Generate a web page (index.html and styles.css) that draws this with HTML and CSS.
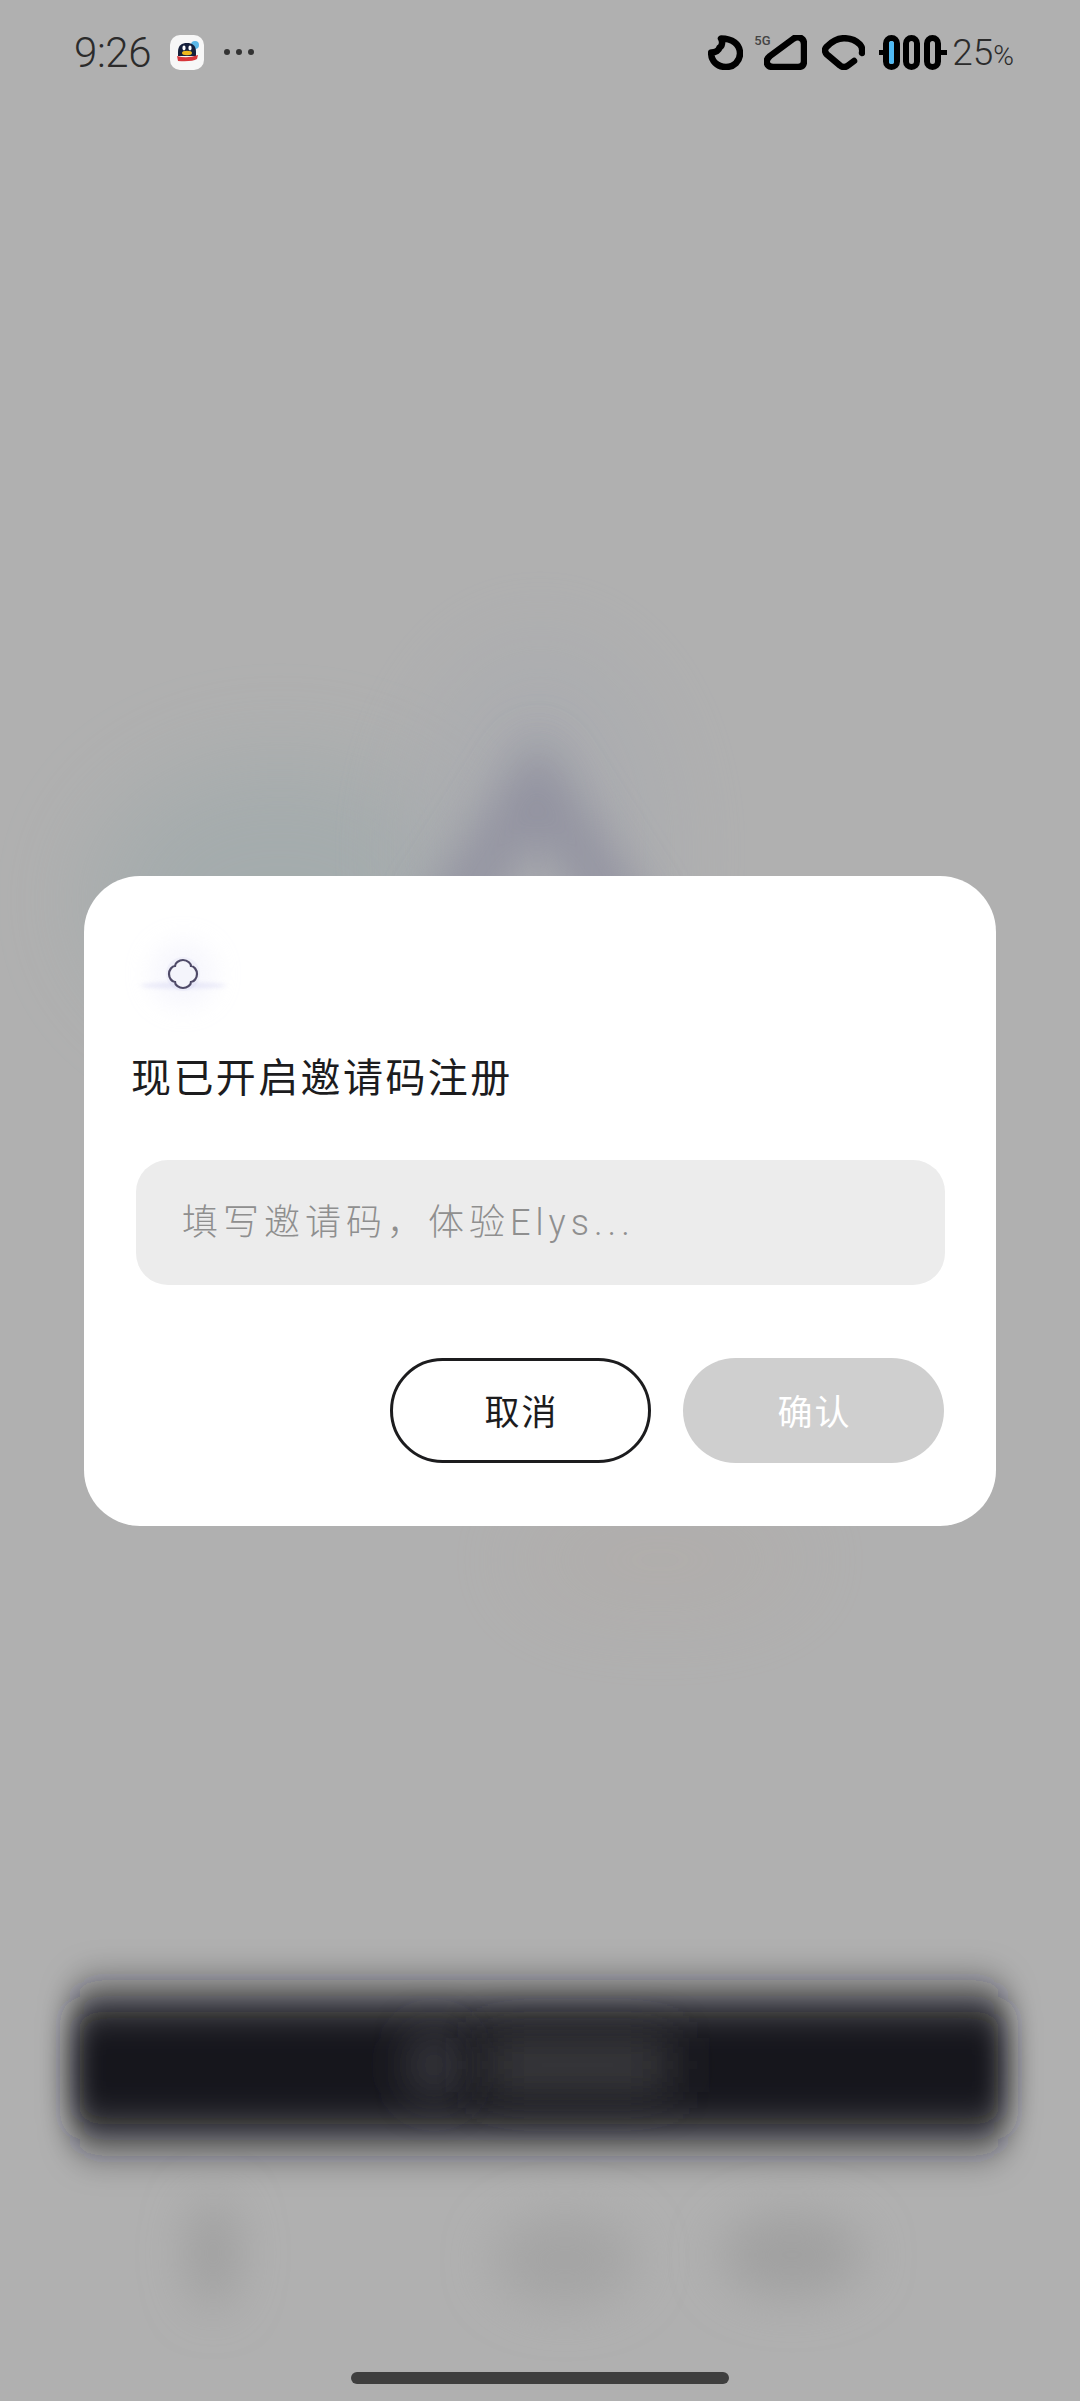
FILE: index.html
```html
<!DOCTYPE html>
<html lang="zh-CN">
<head>
  <meta charset="UTF-8">
  <title>邀请码注册</title>
  <link rel="stylesheet" href="styles.css">
</head>
<body>
  <div class="page">
    <!-- Blurred app behind the dialog -->
    <svg class="backdrop" width="1080" height="2401" viewBox="0 0 1080 2401" aria-hidden="true">
      <defs>
        <filter id="blurBig" filterUnits="userSpaceOnUse" x="-200" y="300" width="1500" height="1800"><feGaussianBlur stdDeviation="50"/></filter>
        <filter id="blurMid" filterUnits="userSpaceOnUse" x="0" y="600" width="1080" height="1801"><feGaussianBlur stdDeviation="24"/></filter>
        <filter id="blurBar" filterUnits="userSpaceOnUse" x="0" y="1850" width="1080" height="450"><feGaussianBlur stdDeviation="15 24"/></filter>
      </defs>
      <ellipse cx="280" cy="900" rx="190" ry="140" fill="#a0aaac" opacity="0.75" filter="url(#blurBig)"/>
      <ellipse cx="540" cy="850" rx="130" ry="210" fill="#a9abb0" opacity="0.7" filter="url(#blurBig)"/>
      <path d="M440 935 L537 782 L634 935" fill="none" stroke="#8b8b9c" stroke-width="52" opacity="0.8" filter="url(#blurMid)"/>
      <ellipse cx="660" cy="1560" rx="150" ry="50" fill="#b1aca9" opacity="0.7" filter="url(#blurBig)"/>
      <rect x="70" y="1996" width="938" height="144" rx="26" fill="#15151a" filter="url(#blurBar)"/>
      <ellipse cx="434" cy="2065" rx="22" ry="32" fill="#4a4a4f" filter="url(#blurMid)"/>
      <rect x="485" y="2038" width="185" height="54" fill="#3c3c40" filter="url(#blurMid)"/>
      <ellipse cx="213" cy="2253" rx="22" ry="55" fill="#9c9c9c" filter="url(#blurMid)"/>
      <ellipse cx="565" cy="2260" rx="72" ry="46" fill="#a4a4a4" filter="url(#blurMid)"/>
      <ellipse cx="792" cy="2255" rx="72" ry="42" fill="#a0a0a0" filter="url(#blurMid)"/>
    </svg>

    <!-- Status bar -->
    <div class="status-bar">
      <div class="status-left">
        <span class="time">9:26</span>
        <svg class="app-icon" width="34" height="35" viewBox="0 0 34 35">
          <rect width="34" height="35" rx="10" fill="#f7f7f7"/>
          <circle cx="25" cy="10" r="4" fill="#5bb8e8"/>
          <path d="M8 17C8 10 12 8 17 8s9 2 9 9v4H8z" fill="#16203c"/>
          <ellipse cx="14" cy="13" rx="1.6" ry="2.4" fill="#fff"/>
          <ellipse cx="20" cy="13" rx="1.6" ry="2.4" fill="#fff"/>
          <ellipse cx="17" cy="18" rx="5" ry="2.2" fill="#f0b81e"/>
          <path d="M7 21q10 3 21-1l-1 4q-5 3-19 2z" fill="#d8353a"/>
        </svg>
        <div class="dots"><i></i><i></i><i></i></div>
      </div>
      <div class="status-right">
        <svg class="ic-moon" width="35" height="35" viewBox="0 0 35 35" fill="none" stroke="#000" stroke-width="6.5" stroke-linejoin="round">
          <path d="M13 3.5C24 3.5 32 9 32 18.5C32 26 26 32 18 32C9 32 3 26 3.2 17.5C8 17.5 11 15 11.5 12.5C14 11.5 15 7 13 3.5Z"/>
        </svg>
        <div class="signal">
          <span class="net">5G</span>
          <svg width="43" height="35" viewBox="0 0 43 35" fill="none" stroke="#000" stroke-width="6.5" stroke-linejoin="round">
            <path d="M9 32H34Q40 32 40 26V9C40 3 34 0 29 4L6 21C0 26 3 32 9 32Z"/>
          </svg>
        </div>
        <svg class="ic-wifi" width="43" height="35" viewBox="0 0 43 35" fill="none" stroke="#000" stroke-width="6.5" stroke-linecap="round" stroke-linejoin="round">
          <path d="M32 26L26 30.5Q22 33.5 18 30.5L5 19.5Q1 15 5 11.5Q13 3.2 22 3.2Q32 3.2 38 9.5Q41 13 40 18"/>
        </svg>
        <svg class="ic-battery" width="68" height="35" viewBox="0 0 68 35">
          <path d="M0 17.5H6M62 17.5H68" stroke="#000" stroke-width="5"/>
          <g fill="none" stroke="#000" stroke-width="6">
            <rect x="7" y="3" width="11" height="29" rx="5.5"/>
            <rect x="27" y="3" width="11" height="29" rx="5.5"/>
            <rect x="48" y="3" width="11" height="29" rx="5.5"/>
          </g>
          <rect x="10" y="6" width="5" height="23" rx="2.5" fill="#4fb9f2"/>
        </svg>
        <span class="battery-text">25<small>%</small></span>
      </div>
    </div>

    <!-- Invite code dialog -->
    <div class="dialog">
      <div class="logo">
        <svg width="34" height="34" viewBox="0 0 34 34">
          <path d="M17 3C22 3 25 7 25 9C28 9 31 13 31 17C31 21 28 25 25 25C25 28 21 31 17 31C13 31 9 28 9 25C6 25 3 21 3 17C3 13 6 9 9 9C9 6 13 3 17 3Z" fill="#f4f4fb" stroke="#4f4a68" stroke-width="2.2"/>
        </svg>
      </div>
      <h2 class="dialog-title">现已开启邀请码注册</h2>
      <input class="code-input" type="text" placeholder="填写邀请码，体验Elys...">
      <div class="dialog-actions">
        <button class="btn btn-cancel" type="button">取消</button>
        <button class="btn btn-confirm" type="button">确认</button>
      </div>
    </div>

    <div class="home-bar"></div>
  </div>
</body>
</html>
```

FILE: styles.css
```css
* {
  box-sizing: border-box;
}

body {
  margin: 0;
  background: #b0b0b0;
  font-family: Roboto, "Noto Sans CJK SC", sans-serif;
}

.page {
  position: relative;
  width: 1080px;
  height: 2401px;
  overflow: hidden;
  display: flex;
  flex-direction: column;
  background: #b0b0b0;
}

.backdrop {
  position: absolute;
  left: 0;
  top: 0;
}

/* Status bar */
.status-bar {
  position: relative;
  height: 876px;
  padding: 34px 66px 0 74px;
  display: flex;
  justify-content: space-between;
  align-items: flex-start;
  flex-shrink: 0;
}

.status-left,
.status-right {
  display: flex;
  align-items: center;
  height: 36px;
}

.time {
  font-size: 42px;
  font-weight: 300;
  color: #2b2b2b;
  letter-spacing: -0.4px;
  margin-right: 19px;
}

.dots {
  display: flex;
  gap: 6px;
  margin-left: 20px;
}

.dots i {
  width: 6px;
  height: 6px;
  border-radius: 50%;
  background: #333;
}

.ic-moon {
  margin-right: 21px;
}

.signal {
  position: relative;
  width: 43px;
  height: 35px;
  margin-right: 15px;
}

.net {
  position: absolute;
  left: -10px;
  top: -2px;
  font-size: 13px;
  font-weight: 500;
  color: #444;
}

.ic-wifi {
  margin-right: 14px;
}

.ic-battery {
  margin-right: 5px;
}

.battery-text {
  font-size: 37px;
  font-weight: 300;
  color: #2b2b2b;
  letter-spacing: 0;
}

.battery-text small {
  font-size: 28px;
}

/* Dialog */
.dialog {
  position: relative;
  width: 912px;
  height: 650px;
  margin-left: 84px;
  padding: 81px 52px 0 47px;
  background: #fff;
  border-radius: 56px;
  flex-shrink: 0;
}

.logo {
  position: relative;
  width: 34px;
  height: 34px;
  margin-left: 35px;
  border-radius: 50%;
  box-shadow: 0 0 24px 16px rgba(232, 232, 250, 0.35);
  background: #f0f0fa;
}

/* faint streak under the logo */
.logo::after {
  content: "";
  position: absolute;
  left: -26px;
  right: -26px;
  top: 26px;
  height: 5px;
  border-radius: 50%;
  background: rgba(205, 205, 240, 0.45);
  filter: blur(2px);
  z-index: 0;
}

.logo svg {
  position: relative;
  z-index: 1;
}

.dialog-title {
  margin: 56px 0 0;
  font-family: "Noto Sans CJK SC", sans-serif;
  font-size: 40px;
  font-weight: 400;
  line-height: 56px;
  letter-spacing: 2.4px;
  color: #1c1c1e;
}

.code-input {
  display: block;
  width: 809px;
  height: 125px;
  margin: 57px 0 0 5px;
  padding: 0 46px;
  border: none;
  outline: none;
  border-radius: 32px;
  background: #ececec;
  font-family: Roboto, "Noto Sans CJK SC", sans-serif;
  font-size: 36px;
  letter-spacing: 5px;
}

.code-input::placeholder {
  color: #8f8f8f;
  font-weight: 300;
  opacity: 1;
}

.dialog-actions {
  display: flex;
  justify-content: flex-end;
  gap: 32px;
  margin-top: 73px;
}

.btn {
  width: 261px;
  height: 105px;
  border-radius: 53px;
  font-family: "Noto Sans CJK SC", sans-serif;
  font-size: 35px;
  letter-spacing: 2px;
  padding: 0 0 3px 2px;
}

.btn-cancel {
  background: #fff;
  border: 3px solid #1c1c1e;
  color: #1c1c1e;
}

.btn-confirm {
  background: #cfcfcf;
  border: none;
  color: #fff;
}

/* Home indicator */
.home-bar {
  position: relative;
  width: 378px;
  height: 12px;
  margin: auto 0 17px 351px;
  border-radius: 6px;
  background: #3f3f3f;
}
```
